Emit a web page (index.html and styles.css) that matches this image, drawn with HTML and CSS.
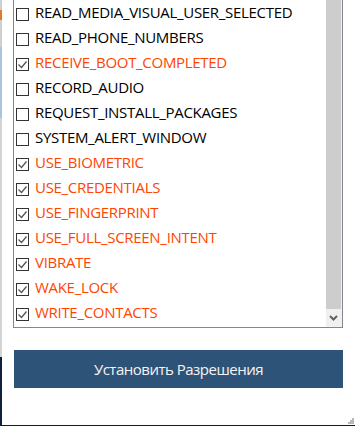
FILE: index.html
```html
<!DOCTYPE html>
<html lang="ru">
<head>
    <meta charset="UTF-8">
    <meta name="viewport" content="width=device-width, initial-scale=1.0">
    <title>Разрешения</title>
    <link rel="stylesheet" href="styles.css">
</head>
<body>
    <div class="behind"></div>
    <div class="window">
        <div class="listbox">
            <ul class="perms">
                <li><span class="box"></span>READ_MEDIA_VISUAL_USER_SELECTED</li>
                <li><span class="box"></span>READ_PHONE_NUMBERS</li>
                <li class="on"><span class="box"><svg viewBox="0 0 11 11"><polyline points="1.5,5.5 4.5,8.5 9.5,2.5"/></svg></span>RECEIVE_BOOT_COMPLETED</li>
                <li><span class="box"></span>RECORD_AUDIO</li>
                <li><span class="box"></span>REQUEST_INSTALL_PACKAGES</li>
                <li><span class="box"></span>SYSTEM_ALERT_WINDOW</li>
                <li class="on"><span class="box"><svg viewBox="0 0 11 11"><polyline points="1.5,5.5 4.5,8.5 9.5,2.5"/></svg></span>USE_BIOMETRIC</li>
                <li class="on"><span class="box"><svg viewBox="0 0 11 11"><polyline points="1.5,5.5 4.5,8.5 9.5,2.5"/></svg></span>USE_CREDENTIALS</li>
                <li class="on"><span class="box"><svg viewBox="0 0 11 11"><polyline points="1.5,5.5 4.5,8.5 9.5,2.5"/></svg></span>USE_FINGERPRINT</li>
                <li class="on"><span class="box"><svg viewBox="0 0 11 11"><polyline points="1.5,5.5 4.5,8.5 9.5,2.5"/></svg></span>USE_FULL_SCREEN_INTENT</li>
                <li class="on"><span class="box"><svg viewBox="0 0 11 11"><polyline points="1.5,5.5 4.5,8.5 9.5,2.5"/></svg></span>VIBRATE</li>
                <li class="on"><span class="box"><svg viewBox="0 0 11 11"><polyline points="1.5,5.5 4.5,8.5 9.5,2.5"/></svg></span>WAKE_LOCK</li>
                <li class="on"><span class="box"><svg viewBox="0 0 11 11"><polyline points="1.5,5.5 4.5,8.5 9.5,2.5"/></svg></span>WRITE_CONTACTS</li>
            </ul>
            <div class="scrollbar">
                <div class="thumb"></div>
                <div class="arrow">
                    <svg viewBox="0 0 9 6" width="9" height="6"><polyline points="1,1 4.5,4.5 8,1"/></svg>
                </div>
            </div>
        </div>
        <button class="apply">Установить Разрешения</button>
        <!-- уголок для изменения размера окна -->
        <svg class="grip" width="6" height="6" viewBox="0 0 6 6">
            <rect x="4" y="0" width="2" height="2"/>
            <rect x="2" y="2" width="2" height="2"/>
            <rect x="4" y="2" width="2" height="2"/>
            <rect x="0" y="4" width="2" height="2"/>
            <rect x="2" y="4" width="2" height="2"/>
            <rect x="4" y="4" width="2" height="2"/>
        </svg>
    </div>
</body>
</html>
```

FILE: styles.css
```css
*{margin: 0; padding: 0; box-sizing: border-box;}
body {
    width: 355px;
    height: 426px;
    display: flex;
    overflow: hidden;
    font-family: "Open Sans", "Liberation Sans", sans-serif;
}
/* полоска окна на заднем плане */
.behind {
    width: 2px;
    height: 426px;
    background: linear-gradient(#cfcfcf 0 10px, #e07a2a 10px 20px, #cfcfcf 20px 47px,
        #a9c4dc 47px 118px, #d4d4d4 118px 357px, #10203a 357px);
}
.window {
    position: relative;
    flex: 1;
    height: 426px;
    background-color: #fff;
    border-bottom: 1px solid #1a1a1a;
    padding-left: 11px;
    padding-right: 12px;
}
.listbox {
    display: flex;
    height: 328px;
    border: 1px solid #828790;
    border-top: none;
}
.perms {
    flex: 1;
    list-style: none;
    padding-left: 2px;
}
.perms li {
    display: flex;
    align-items: flex-start;
    height: 25px;
    line-height: 25px;
    font-size: 15px;
    letter-spacing: -0.3px;
    color: #000;
    white-space: nowrap;
}
.perms li.on {
    color: #ff4500;
}
.box {
    width: 13px;
    height: 13px;
    margin-top: 8px;
    margin-right: 6px;
    border: 1px solid #333;
    background-color: #fff;
    flex-shrink: 0;
}
.box svg {
    display: block;
    width: 11px;
    height: 11px;
    fill: none;
    stroke: #555;
    stroke-width: 1.3;
}
.scrollbar {
    width: 16px;
    display: flex;
    flex-direction: column;
    background-color: #f0f0f0;
}
.thumb {
    height: 309px;
    width: 15px;
    background-color: #cdcdcd;
}
.arrow {
    flex: 1;
    width: 15px;
    display: flex;
    justify-content: center;
    align-items: center;
}
.arrow svg {
    fill: none;
    stroke: #606060;
    stroke-width: 2;
}
.apply {
    display: block;
    width: 329px;
    height: 38px;
    margin: 22px 0 0 1px;
    border: none;
    outline: none;
    background-color: #2e5378;
    color: #f4f4f4;
    font-family: "Open Sans", "Liberation Sans", sans-serif;
    font-size: 15px;
    letter-spacing: -0.5px;
}
.grip {
    position: absolute;
    right: 1px;
    bottom: 1px;
    fill: #b8b8b8;
}
```
